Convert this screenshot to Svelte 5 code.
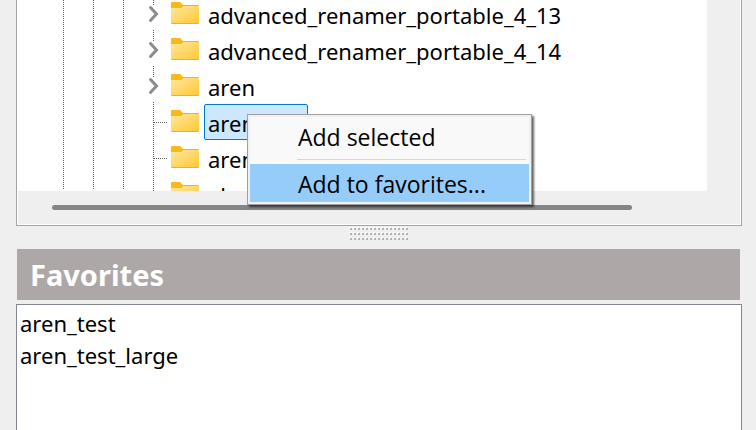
<script lang="ts">
  interface TreeItem {
    name: string;
    expandable: boolean;
    selected?: boolean;
  }

  const folders: TreeItem[] = [
    { name: "advanced_renamer_portable_4_13", expandable: true },
    { name: "advanced_renamer_portable_4_14", expandable: true },
    { name: "aren", expandable: true },
    { name: "aren_test", expandable: false, selected: true },
    { name: "aren_test_large", expandable: false },
    { name: "ab", expandable: false },
  ];

  const favorites = ["aren_test", "aren_test_large"];
</script>

<main>
  <section class="panel">
    <ul class="tree">
      {#each folders as folder}
        <li>
          <svg class="branch" viewBox="0 0 24 36">
            {#if folder.expandable}
              <path class="guide" d="M10.5 -2V10" />
              <path class="chevron" d="M7.5 11.5L13.5 18L7.5 24.5" />
            {:else}
              <path class="guide" d="M10.5 -2V34M11 18.5H25" />
            {/if}
          </svg>
          <svg class="folder" viewBox="0 0 28 22">
            <defs>
              <linearGradient id="front" x1="0" y1="0" x2="1" y2="1">
                <stop offset="0" stop-color="#ffe79c" />
                <stop offset="1" stop-color="#ffc937" />
              </linearGradient>
            </defs>
            <path fill="#eeb02a" d="M0 3H27Q28 3 28 4V21Q28 22 27 22H1Q0 22 0 21Z" />
            <path fill="url(#front)" d="M0 6H10L12 4H28V21H0Z" />
            <path fill="#fbb917" d="M0 1Q0 0 1 0H9L12 3V4L10 6H0Z" />
          </svg>
          <button class="label" class:selected={folder.selected}>{folder.name}</button>
        </li>
      {/each}
    </ul>
    <div class="scrollbar"><div class="thumb"></div></div>

    <div class="menu" role="menu">
      <button role="menuitem">Add selected</button>
      <hr />
      <button role="menuitem" class="active">Add to favorites...</button>
    </div>
  </section>

  <div class="splitter">
    <svg width="60" height="13" viewBox="0 0 60 13">
      <defs>
        <pattern id="grip" width="4" height="5" patternUnits="userSpaceOnUse">
          <path fill="#fff" d="M0 0H2V2H0Z" />
          <path fill="#b4b4b4" d="M1 1H3V3H1Z" />
        </pattern>
      </defs>
      <rect width="60" height="13" fill="url(#grip)" />
    </svg>
  </div>

  <h2>Favorites</h2>
  <ul class="favorites">
    {#each favorites as favorite}
      <li><button>{favorite}</button></li>
    {/each}
  </ul>
</main>

<style>
  :global(body) {
    margin: 0;
    background: #efefef;
  }

  main {
    display: flex;
    flex-direction: column;
    box-sizing: border-box;
    height: 100vh;
    padding: 0 14px 0 16px;
    overflow: hidden;
    font-family: "Noto Sans", "Open Sans", sans-serif;
    font-size: 22px;
    color: #000;
  }

  ul {
    margin: 0;
    padding: 0;
    list-style: none;
  }

  button {
    margin: 0;
    padding: 0;
    border: 0;
    background: none;
    color: inherit;
    font: inherit;
    text-align: left;
    white-space: nowrap;
  }

  .panel {
    position: relative;
    flex: none;
    border: 1px solid #a5a5a8;
    border-top: 0;
    box-shadow: inset -1px -1px #fff, inset 1px 0 #fff;
  }

  .tree {
    display: flex;
    flex-direction: column;
    justify-content: flex-start;
    height: 191px;
    margin-right: 34px;
    overflow: hidden;
    background: #fff;
    border-bottom-right-radius: 2px;
    background-image: repeating-linear-gradient(#606060 0 1px, #fff 1px 2px),
      repeating-linear-gradient(#606060 0 1px, #fff 1px 2px),
      repeating-linear-gradient(#606060 0 1px, #fff 1px 2px);
    background-size: 1px 190px;
    background-position: 46px 0, 76px 0, 106px 0;
    background-repeat: no-repeat;
  }

  .tree li {
    display: flex;
    flex: none;
    align-items: center;
    height: 36px;
    padding-left: 126px;
  }

  .tree li:first-child {
    margin-top: -4px;
  }

  .branch {
    width: 24px;
    height: 36px;
    overflow: visible;
  }

  .guide {
    fill: none;
    stroke: #606060;
    stroke-dasharray: 1 1;
  }

  .chevron {
    fill: none;
    stroke: #8b8b8b;
    stroke-width: 3;
    stroke-linecap: round;
  }

  .folder {
    width: 28px;
    height: 22px;
    margin: 0 5px 2px 4px;
  }

  .label {
    box-sizing: border-box;
    height: 36px;
    padding: 2px 3px 0;
    border: 1px solid transparent;
    border-radius: 2px;
    line-height: 32px;
  }

  .label.selected {
    border-color: #0078d4;
    background: #cce8ff;
  }

  .scrollbar {
    height: 34px;
    padding: 14px 109px 0 35px;
    box-sizing: border-box;
  }

  .thumb {
    height: 5px;
    border-radius: 3px;
    background: #858585;
  }

  .menu {
    position: absolute;
    top: 114px;
    left: 230px;
    box-sizing: border-box;
    width: 285px;
    padding: 2px;
    border: 1px solid #a0a0a0;
    background: #f9f9f9;
    box-shadow: inset 0 0 0 2px #f0f0f0, 2px 2px 2px rgba(0, 0, 0, 0.6);
    font-family: "Open Sans", "Noto Sans", sans-serif;
    font-size: 23px;
  }

  .menu button {
    display: block;
    width: 100%;
    height: 38px;
    padding: 2px 0 0 48px;
    line-height: 36px;
  }

  .menu button.active {
    background: #96ccfa;
  }

  .menu hr {
    height: 1px;
    margin: 4px 3px 4px 47px;
    border: 0;
    background: #d7d7d7;
  }

  .splitter {
    display: flex;
    flex: none;
    justify-content: center;
    height: 23px;
  }

  .splitter svg {
    margin-top: 1px;
  }

  h2 {
    flex: none;
    height: 51px;
    margin: 0 2px 4px 1px;
    padding-left: 13px;
    background: #ada7a8;
    color: #fff;
    font-size: 29px;
    font-weight: 700;
    line-height: 51px;
  }

  .favorites {
    flex: 1;
    padding: 2px 3px;
    border: 1px solid #828790;
    border-bottom: 0;
    background: #fff;
  }

  .favorites button {
    display: block;
    width: 100%;
    height: 32px;
    line-height: 32px;
  }
</style>
